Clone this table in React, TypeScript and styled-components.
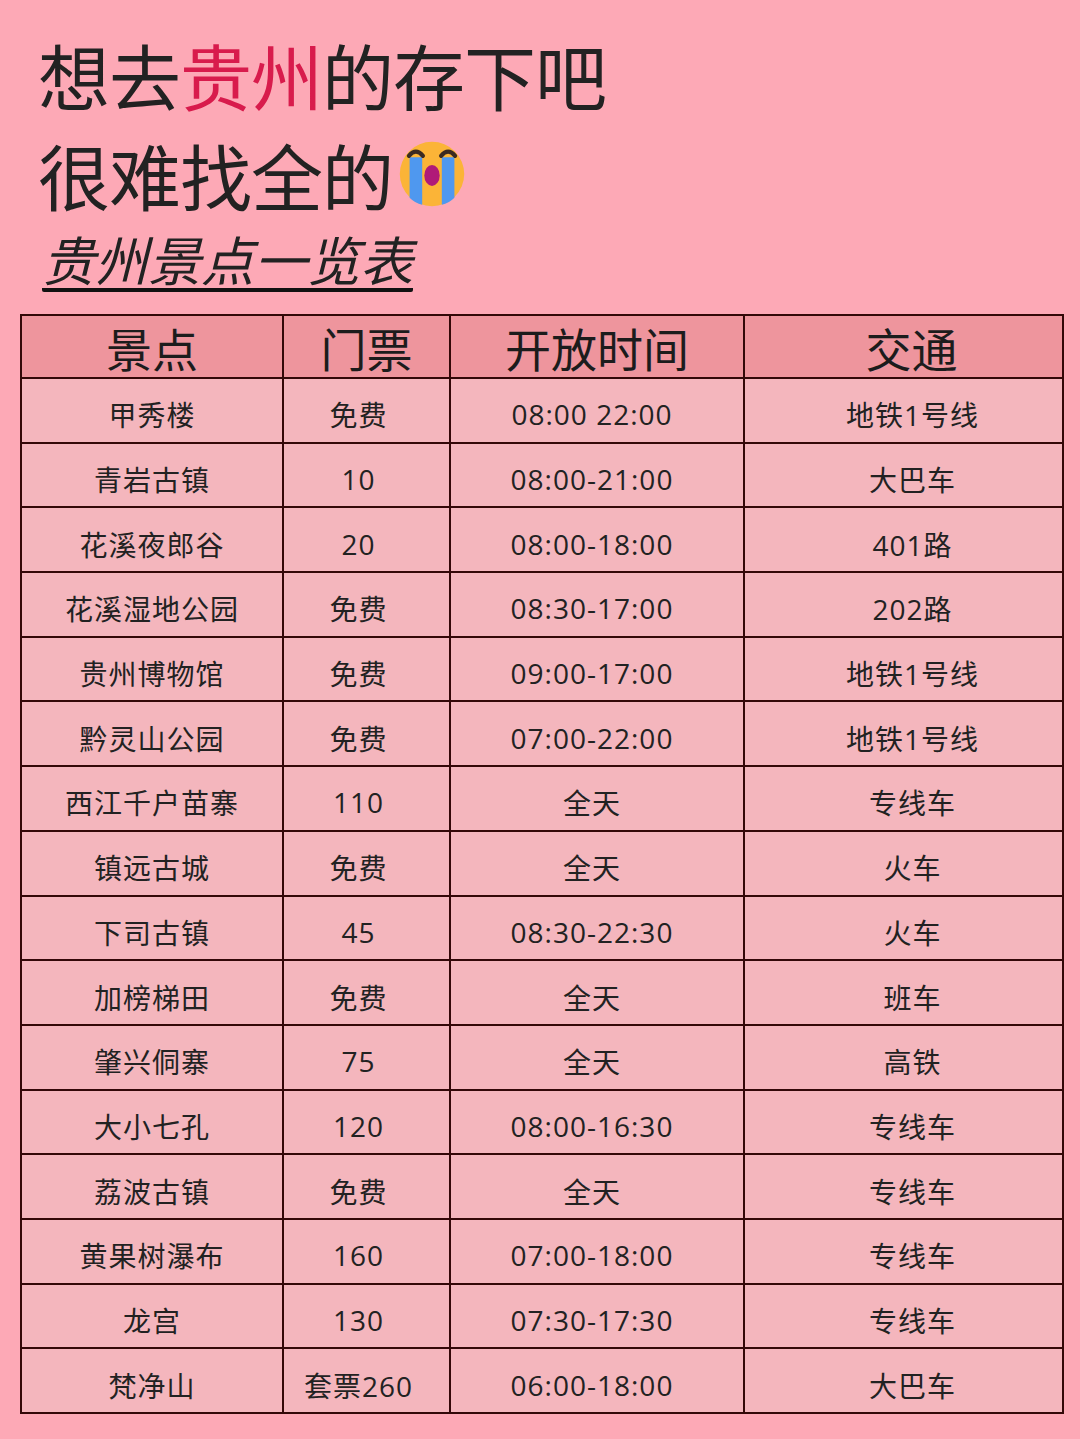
import React from "react";
import styled, { createGlobalStyle } from "styled-components";

const GlobalStyle = createGlobalStyle`
  html, body {
    margin: 0;
    padding: 0;
    background: #fda9b6;
  }
  body {
    font-family: "Open Sans", "Noto Sans CJK SC", sans-serif;
    color: #222;
  }
`;

type Row = [string, string, string, string];

const rows: Row[] = [
  ["甲秀楼", "免费", "08:00 22:00", "地铁1号线"],
  ["青岩古镇", "10", "08:00-21:00", "大巴车"],
  ["花溪夜郎谷", "20", "08:00-18:00", "401路"],
  ["花溪湿地公园", "免费", "08:30-17:00", "202路"],
  ["贵州博物馆", "免费", "09:00-17:00", "地铁1号线"],
  ["黔灵山公园", "免费", "07:00-22:00", "地铁1号线"],
  ["西江千户苗寨", "110", "全天", "专线车"],
  ["镇远古城", "免费", "全天", "火车"],
  ["下司古镇", "45", "08:30-22:30", "火车"],
  ["加榜梯田", "免费", "全天", "班车"],
  ["肇兴侗寨", "75", "全天", "高铁"],
  ["大小七孔", "120", "08:00-16:30", "专线车"],
  ["荔波古镇", "免费", "全天", "专线车"],
  ["黄果树瀑布", "160", "07:00-18:00", "专线车"],
  ["龙宫", "130", "07:30-17:30", "专线车"],
  ["梵净山", "套票260", "06:00-18:00", "大巴车"],
];

const headers = ["景点", "门票", "开放时间", "交通"];
const colWidths = [262, 167, 294, 319];
// small horizontal nudges of the text in each column, as in the picture
const bodyShift = ["0", "0 16px 0 0", "0 10px 0 0", "0 0 0 18px"];
const headShift = ["0", "0", "0", "0 0 0 16px"];

const Page = styled.div`
  width: 1080px;
  min-height: 1439px;
  box-sizing: border-box;
  padding-top: 24px;
`;

const TitleBlock = styled.div`
  padding-left: 38px;
`;

const TitleLine = styled.div`
  font-family: "Noto Sans CJK SC", sans-serif;
  font-size: 72px;
  line-height: 100px;
  color: #222;
  letter-spacing: -1px;
  display: flex;
  align-items: center;
`;

const Accent = styled.span`
  color: #d81b4c;
`;

const Subtitle = styled.div`
  display: inline-block;
  margin-top: 4px;
  margin-left: 4px;
  font-family: "Noto Sans CJK SC", sans-serif;
  font-style: italic;
  font-size: 53px;
  line-height: 60px;
  color: #222;
  border-bottom: 4px solid #111;
  border-radius: 2px;
`;

const Table = styled.table`
  margin: 22px 0 0 20px;
  width: 1042px;
  border-collapse: collapse;
  table-layout: fixed;
`;

const HeadCell = styled.th<{ $pad: string }>`
  height: 61px;
  padding: ${({ $pad }) => $pad};
  background: #ee959d;
  border: 2.5px solid #330808;
  font-family: "Noto Sans CJK SC", sans-serif;
  font-weight: 400;
  font-size: 46px;
  line-height: 1;
  color: #1c1c1c;
  text-align: center;
  vertical-align: middle;
`;

const Cell = styled.td<{ $pad: string }>`
  height: 64.7px;
  box-sizing: border-box;
  padding: ${({ $pad }) => $pad};
  background: #f4b6bd;
  border: 2.5px solid #330808;
  font-size: 28px;
  letter-spacing: 1px;
  color: #222;
  text-align: center;
  vertical-align: middle;
`;

const CellText = styled.span`
  position: relative;
  top: 4px;
`;

const CryingFace = () => (
  <svg width="70" height="70" viewBox="0 0 100 100" style={{ marginLeft: 4 }}>
    <circle cx="50" cy="50" r="46" fill="#fbb437" />
    <path d="M18 26 L18 84 Q26 92 36 94 L36 26 Z" fill="#4f98ef" />
    <path d="M82 26 L82 84 Q74 92 64 94 L64 26 Z" fill="#4f98ef" />
    <path d="M17 24 Q27 12 37 24" stroke="#3b2a20" strokeWidth="6" fill="none" strokeLinecap="round" />
    <path d="M63 24 Q73 12 83 24" stroke="#3b2a20" strokeWidth="6" fill="none" strokeLinecap="round" />
    <ellipse cx="50" cy="52" rx="11" ry="15" fill="#b01a78" />
  </svg>
);

export default function App() {
  return (
    <Page>
      <GlobalStyle />
      <TitleBlock>
        <TitleLine>
          想去<Accent>贵州</Accent>的存下吧
        </TitleLine>
        <TitleLine>
          很难找全的
          <CryingFace />
        </TitleLine>
        <Subtitle>贵州景点一览表</Subtitle>
      </TitleBlock>
      <Table>
        <colgroup>
          {colWidths.map((w, i) => (
            <col key={i} style={{ width: w }} />
          ))}
        </colgroup>
        <thead>
          <tr>
            {headers.map((h, i) => (
              <HeadCell key={h} $pad={headShift[i]}>
                {h}
              </HeadCell>
            ))}
          </tr>
        </thead>
        <tbody>
          {rows.map((r) => (
            <tr key={r[0]}>
              {r.map((c, i) => (
                <Cell key={i} $pad={bodyShift[i]}>
                  <CellText>{c}</CellText>
                </Cell>
              ))}
            </tr>
          ))}
        </tbody>
      </Table>
    </Page>
  );
}
